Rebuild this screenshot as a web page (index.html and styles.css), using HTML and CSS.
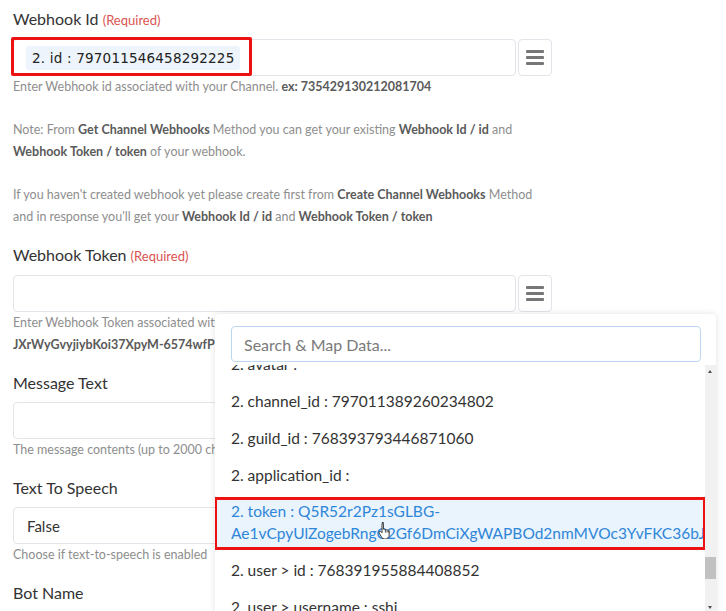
FILE: index.html
```html
<html>
  <head>
    <link rel="stylesheet" href="styles.css">
    <title>Map Data</title>
  </head>
  <body>
    <div id="form">
      <div class="field">
        <div class="label">Webhook Id <span class="required">(Required)</span></div>
        <div class="input_row">
          <div class="input marked">
            <span class="chip">2. id : 797011546458292225</span>
          </div>
          <div class="menu_button"><span></span><span></span><span></span></div>
        </div>
        <div class="help">Enter Webhook id associated with your Channel. <b>ex: 735429130212081704</b></div>
        <div class="note">
          Note: From <b>Get Channel Webhooks</b> Method you can get your existing <b>Webhook Id / id</b> and<br>
          <b>Webhook Token / token</b> of your webhook.
        </div>
        <div class="note">
          If you haven't created webhook yet please create first from <b>Create Channel Webhooks</b> Method<br>
          and in response you'll get your <b>Webhook Id / id</b> and <b>Webhook Token / token</b>
        </div>
      </div>
      <div class="field">
        <div class="label">Webhook Token <span class="required">(Required)</span></div>
        <div class="input_row">
          <div class="input"></div>
          <div class="menu_button"><span></span><span></span><span></span></div>
        </div>
        <div class="help">Enter Webhook Token associated with your Channel. ex:<br>
          <b>JXrWyGvyjiybKoi37XpyM-6574wfP_tQ5R52r2Pz1sGLBG</b></div>
      </div>
      <div class="field">
        <div class="label">Message Text</div>
        <div class="input_row">
          <div class="input"></div>
        </div>
        <div class="help">The message contents (up to 2000 characters)</div>
      </div>
      <div class="field">
        <div class="label">Text To Speech</div>
        <div class="input_row">
          <div class="input select">False</div>
        </div>
        <div class="help">Choose if text-to-speech is enabled</div>
      </div>
      <div class="field">
        <div class="label">Bot Name</div>
      </div>
    </div>

    <div id="map_dropdown">
      <div class="search_box">
        <div class="search">Search &amp; Map Data...</div>
      </div>
      <div class="list_wrap">
        <div class="list">
          <div class="items">
            <div class="item">2. avatar :</div>
            <div class="item">2. channel_id : 797011389260234802</div>
            <div class="item">2. guild_id : 768393793446871060</div>
            <div class="item">2. application_id :</div>
            <div class="item active">2. token : Q5R52r2Pz1sGLBG-Ae1vCpyUlZogebRngC2Gf6DmCiXgWAPBOd2nmMVOc3YvFKC36bJXrWyGvyjiyb
              <svg class="cursor" width="14" height="18" viewBox="0 0 14 18">
                <path d="M4 1.5c.8 0 1.4.6 1.4 1.4v5.3l.4-.1c.7-.2 1.4.2 1.6.8.5-.4 1.3-.3 1.7.2.5-.3 1.2-.2 1.6.3.3.2.5.6.5 1v3.6c0 2.2-1.7 4-3.900 4H6.6c-1.1 0-2.1-.5-2.8-1.4L1.3 12.2c-.4-.6-.3-1.3.2-1.7.5-.4 1.2-.3 1.6.2l.9 1V2.9c0-.8.6-1.4 1.4-1.4z" fill="#fff" stroke="#222" stroke-width="0.9"/>
                <path d="M7.4 9v2.6M9.1 9.4v2.2M10.7 9.8v1.8" stroke="#222" stroke-width="0.8"/>
              </svg>
            </div>
            <div class="item">2. user &gt; id : 768391955884408852</div>
            <div class="item">2. user &gt; username : sshi</div>
          </div>
          <div class="scrollbar">
            <div class="arrow up"></div>
            <div class="track"><div class="thumb"></div></div>
            <div class="arrow down"></div>
          </div>
        </div>
      </div>
    </div>
  </body>
</html>
```

FILE: styles.css
```css
html, body {
  margin:      0;
  color:       #333;
  font-family: Lato, "Open Sans", sans-serif;
  background:  #fff;
  overflow:    hidden;
}
body {
  padding: 8px 13px 0 13px;
  height:  611px;
  box-sizing: border-box;
}
#form {
  width: 539px;
}
.field {
  margin-bottom: 16px;
}
.label {
  font-size:     16px;
  line-height:   22px;
  margin-bottom: 8px;
}
.required {
  color:     #d9534f;
  font-size: 13px;
}
.input_row {
  display: flex;
  gap:     2px;
}
.input {
  flex:          1;
  height:        37px;
  box-sizing:    border-box;
  border:        1px solid #e3e3ea;
  border-radius: 4px;
  display:       flex;
  align-items:   center;
  padding:       0 12px;
}
.input.marked {
  position: relative;
}
.input.marked::after {
  content:   "";
  position:  absolute;
  left:      -3px;
  top:       -3px;
  width:     235px;
  height:    33px;
  border:    3px solid #ee1111;
  border-radius: 2px;
}
.chip {
  background:    #eef4fb;
  border-radius: 3px;
  padding:       4px 6px;
  font-family:   "DejaVu Sans", sans-serif;
  font-size:     13.5px;
  color:         #222;
  letter-spacing: 0.2px;
}
.select {
  font-size:   15px;
  padding-left: 13px;
}
.menu_button {
  width:          34px;
  height:         37px;
  box-sizing:     border-box;
  border:         1px solid #e3e3ea;
  border-radius:  4px;
  display:        flex;
  flex-direction: column;
  align-items:    center;
  justify-content: center;
  gap:            3px;
}
.menu_button span {
  width:         18px;
  height:        3px;
  background:    #777;
  border-radius: 1px;
}
.help {
  font-size:   12.5px;
  line-height: 22px;
  color:       #8e8e8e;
  white-space: nowrap;
  overflow:    hidden;
}
.help b, .note b {
  color: #5a5a5a;
}
.note {
  font-size:   12.5px;
  line-height: 22px;
  color:       #8e8e8e;
  margin-top:  21px;
  white-space: nowrap;
}

#map_dropdown {
  position:   absolute;
  left:       215px;
  top:        314px;
  width:      501px;
  height:     300px;
  background: #fff;
  box-shadow: 0 0 6px rgba(0, 0, 0, 0.12);
  border-radius: 4px 4px 0 0;
  display:    flex;
  flex-direction: column;
}
.search_box {
  padding: 12px 15px 3px 16px;
}
.search {
  height:        36px;
  box-sizing:    border-box;
  border:        1px solid #bcd7f1;
  border-radius: 4px;
  padding:       0 12px;
  display:       flex;
  align-items:   center;
  font-size:     16px;
  color:         #7a7a7a;
}
.list_wrap {
  flex:     1;
  overflow: hidden;
}
.list {
  display: flex;
  height:  100%;
}
.items {
  flex:       1;
  overflow:   hidden;
  margin-top: -20px;
}
.item {
  font-size:   15.5px;
  line-height: 22px;
  padding:     8px 16px 7px 16px;
  white-space: nowrap;
  overflow:    hidden;
}
.item.active {
  position:    relative;
  white-space: normal;
  background:  #e9f4fd;
  color:       #2f86d8;
  padding:     2px 16px 5px 16px;
  margin:      5px 0 2px 0;
  height:      44px;
  outline:     3px solid #ee1111;
  outline-offset: -2px;
}
.cursor {
  position: absolute;
  left:     163px;
  top:      23px;
}
.scrollbar {
  width:          11px;
  background:     #f1f1f1;
  display:        flex;
  flex-direction: column;
}
.arrow {
  height:   13px;
  position: relative;
}
.arrow::after {
  content:  "";
  position: absolute;
  left:     3px;
  border-left:  2.5px solid transparent;
  border-right: 2.5px solid transparent;
}
.arrow.up::after {
  top:           5px;
  border-bottom: 3px solid #505050;
}
.arrow.down::after {
  top:        5px;
  border-top: 3px solid #505050;
}
.track {
  flex:        1;
  padding-top: 179px;
}
.thumb {
  height:     22px;
  background: #c1c1c1;
}
```
